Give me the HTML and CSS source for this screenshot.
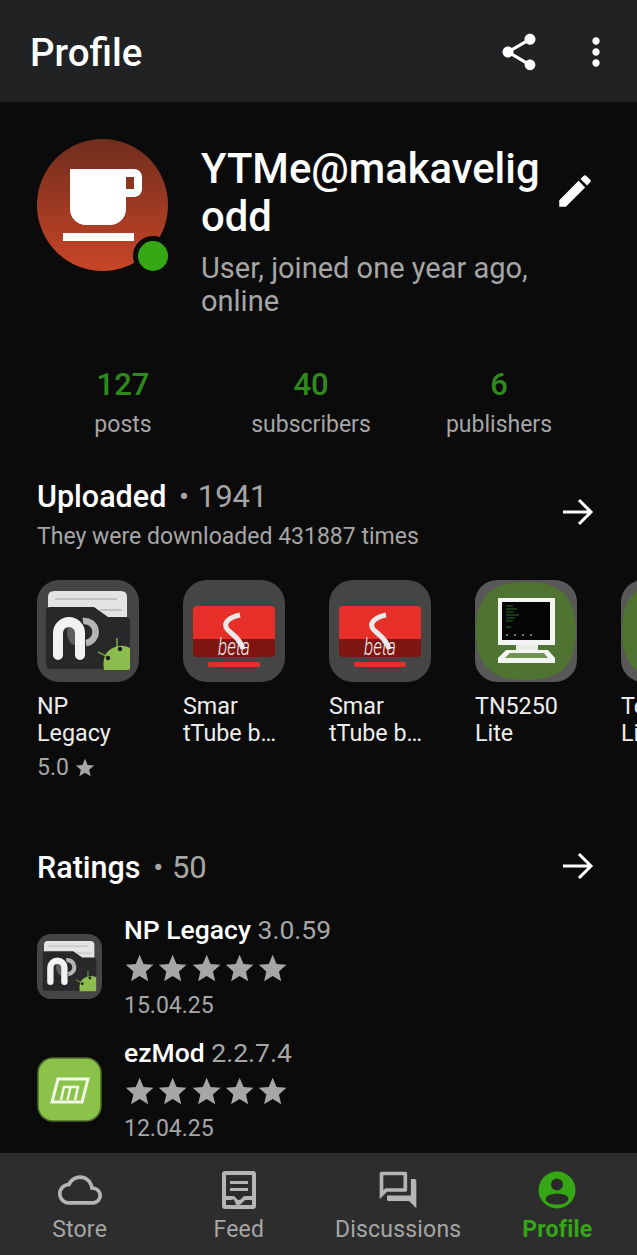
FILE: index.html
```html
<!DOCTYPE html>
<html lang="en">
<head>
<meta charset="utf-8">
<title>Profile</title>
<link rel="stylesheet" href="styles.css">
</head>
<body>
<svg class="defs" width="0" height="0" aria-hidden="true">
  <defs>
    <symbol id="star" viewBox="0 0 24 24"><path d="M12 17.27L18.18 21l-1.64-7.03L22 9.24l-7.19-.61L12 2 9.19 8.63 2 9.24l5.46 4.73L5.82 21z"/></symbol>
    <symbol id="arrow" viewBox="0 0 32 28"><path d="M1 14h28M17 2l12 12-12 12" fill="none" stroke="#fff" stroke-width="3"/></symbol>
    <symbol id="np" viewBox="0 0 102 102">
      <rect width="102" height="102" rx="22" fill="#454545"/>
      <path d="M11 17q0-6 6-6h67q6 0 6 6v25H11z" fill="#e3e3e3"/>
      <path d="M18 19h62M63 30h22" stroke="#c2c2c2" stroke-width="2"/>
      <path d="M9 31q0-4 4-4h44l14 10h18q4 0 4 4v44q0 4-4 4H13q-4 0-4-4z" fill="#28282a"/>
      <ellipse cx="38" cy="52" rx="8" ry="13" fill="#5c5c5c"/>
      <path d="M46 41a11 11 0 0 1 3 22" fill="none" stroke="#b5b5b5" stroke-width="6.500"/>
      <path d="M21 75V53a11 11 0 0 1 22 0v22" fill="none" stroke="#f2f2f2" stroke-width="10" stroke-linecap="round"/>
      <path d="M67 90Q64 72 78 67q8-3 15 1v20q0 2-2 2z" fill="#8cbb50"/>
      <circle cx="71" cy="78" r="2.2" fill="#1c1c1c"/><circle cx="83" cy="69" r="2.2" fill="#1c1c1c"/>
      <path d="M61 72l8 4M80 58v9" stroke="#8cbb50" stroke-width="1.3"/>
    </symbol>
    <symbol id="smart" viewBox="0 0 102 102">
      <rect width="102" height="102" rx="24" fill="#454545"/>
      <path d="M10 30q0-4 4-4h74q4 0 4 4v29H10z" fill="#e72f29"/>
      <path d="M10 59h82v14q0 4-4 4H14q-4 0-4-4z" fill="#7f1510"/>
      <rect x="25" y="82" width="52" height="5" rx="2" fill="#e72f29"/>
      <path d="M57 35C47 37 41 42 43 47c2 6 14 9 17 22" fill="none" stroke="#e9e9e9" stroke-width="5"/>
      <text class="beta" x="51" y="75" text-anchor="middle" textLength="32" lengthAdjust="spacingAndGlyphs">beta</text>
    </symbol>
    <symbol id="tn" viewBox="0 0 102 102">
      <rect width="102" height="102" rx="22" fill="#585858"/>
      <path d="M51 2c34 0 50 14 50 49s-16 49-50 49S1 86 1 51 17 2 51 2z" fill="#4f7431"/>
      <rect x="23" y="18" width="57" height="47" fill="#f4f4f4"/>
      <rect x="27" y="22" width="48" height="38" fill="#050505"/>
      <path d="M31 26h7M31 29h11M31 32h8M31 35h13M31 38h9M31 41h7M31 47h5" stroke="#2a6a2e" stroke-width="1.200"/>
      <path d="M31 55h30" stroke="#9a9a9a" stroke-width="1.500" stroke-dasharray="2 6"/>
      <rect x="41" y="65" width="22" height="7" fill="#e7eee3"/>
      <path d="M31 70h42l7 8v5H23v-5z" fill="#f4f4f4"/>
      <path d="M35 73h34l4 5H30z" fill="#6f9350"/>
    </symbol>
    <symbol id="ez" viewBox="0 0 65 65">
      <rect x="1" y="1" width="63" height="63" rx="15" fill="#8bc34a" stroke="#4d6b2c" stroke-width="1.500"/>
      <path d="M21 22h30l-6 23H15z" fill="none" stroke="#f2f6e8" stroke-width="3"/>
      <path d="M24 43l3-13h14l-3 13M33.500 30l-3 13" fill="none" stroke="#f2f6e8" stroke-width="2.500"/>
    </symbol>
  </defs>
</svg>
<div class="app">
  <header class="toolbar">
    <h1 class="toolbar-title">Profile</h1>
    <svg class="tb-share" viewBox="0 0 24 24"><path d="M18 16.080c-.76 0-1.440.3-1.960.77L8.910 12.700c.05-.23.09-.46.09-.7s-.04-.47-.09-.7l7.050-4.110c.54.5 1.250.81 2.040.81 1.660 0 3-1.340 3-3s-1.340-3-3-3-3 1.340-3 3c0 .24.04.47.09.7L8.040 9.810C7.500 9.310 6.790 9 6 9c-1.660 0-3 1.340-3 3s1.340 3 3 3c.79 0 1.500-.31 2.040-.81l7.120 4.160c-.05.21-.08.43-.08.65 0 1.610 1.310 2.920 2.920 2.920 1.610 0 2.920-1.310 2.920-2.920s-1.310-2.920-2.920-2.920z"/></svg>
    <svg class="tb-more" viewBox="0 0 24 24"><path d="M12 8c1.100 0 2-.9 2-2s-.9-2-2-2-2 .9-2 2 .9 2 2 2zm0 2c-1.100 0-2 .9-2 2s.9 2 2 2 2-.9 2-2-.9-2-2-2zm0 6c-1.100 0-2 .9-2 2s.9 2 2 2 2-.9 2-2-.9-2-2-2z"/></svg>
  </header>

  <main class="content">
    <section class="profile">
      <div class="avatar">
        <svg class="cup" viewBox="0 0 24 24"><path d="M20 3H4v10c0 2.210 1.790 4 4 4h6c2.210 0 4-1.790 4-4v-3h2c1.110 0 2-.9 2-2V5c0-1.110-.89-2-2-2zm0 5h-2V5h2v3zM2.250 19H20v2H2.250z"/></svg>
        <span class="status"></span>
      </div>
      <div class="who">
        <div class="name">YTMe@makaveligodd</div>
        <div class="joined">User, joined one year ago, online</div>
      </div>
      <svg class="edit" viewBox="0 0 24 24"><path d="M3 17.250V21h3.750L17.810 9.940l-3.750-3.750L3 17.250zM20.710 7.040c.39-.39.39-1.020 0-1.410l-2.340-2.340c-.39-.39-1.020-.39-1.410 0l-1.830 1.830 3.750 3.750 1.830-1.830z"/></svg>
    </section>

    <section class="stats">
      <div class="stat"><div class="stat-num">127</div><div class="stat-label">posts</div></div>
      <div class="stat"><div class="stat-num">40</div><div class="stat-label">subscribers</div></div>
      <div class="stat"><div class="stat-num">6</div><div class="stat-label">publishers</div></div>
    </section>

    <section class="uploaded">
      <div class="sec-head">
        <div>
          <div class="sec-title">Uploaded <span class="sec-count"><span class="dot">•</span> 1941</span></div>
          <div class="sec-sub">They were downloaded 431887 times</div>
        </div>
        <svg class="arrow"><use href="#arrow"/></svg>
      </div>
      <div class="apps">
        <div class="app-card">
          <svg class="app-icon"><use href="#np"/></svg>
          <div class="app-name">NP<br>Legacy</div>
          <div class="app-rate">5.0 <svg class="mini-star"><use href="#star"/></svg></div>
        </div>
        <div class="app-card">
          <svg class="app-icon"><use href="#smart"/></svg>
          <div class="app-name">Smar<br>tTube b…</div>
        </div>
        <div class="app-card">
          <svg class="app-icon"><use href="#smart"/></svg>
          <div class="app-name">Smar<br>tTube b…</div>
        </div>
        <div class="app-card">
          <svg class="app-icon"><use href="#tn"/></svg>
          <div class="app-name">TN5250<br>Lite</div>
        </div>
        <div class="app-card">
          <svg class="app-icon"><use href="#tn"/></svg>
          <div class="app-name">Telnet<br>Lite</div>
        </div>
      </div>
    </section>

    <section class="ratings">
      <div class="sec-head rate-head">
        <div class="sec-title">Ratings <span class="sec-count"><span class="dot">•</span> 50</span></div>
        <svg class="arrow"><use href="#arrow"/></svg>
      </div>
      <div class="rate-row">
        <svg class="rate-icon"><use href="#np"/></svg>
        <div class="rate-body">
          <div class="rate-name"><b>NP Legacy</b> 3.0.59</div>
          <div class="stars"><svg><use href="#star"/></svg><svg><use href="#star"/></svg><svg><use href="#star"/></svg><svg><use href="#star"/></svg><svg><use href="#star"/></svg></div>
          <div class="rate-date">15.04.25</div>
        </div>
      </div>
      <div class="rate-row">
        <svg class="rate-icon"><use href="#ez"/></svg>
        <div class="rate-body">
          <div class="rate-name"><b>ezMod</b> 2.2.7.4</div>
          <div class="stars"><svg><use href="#star"/></svg><svg><use href="#star"/></svg><svg><use href="#star"/></svg><svg><use href="#star"/></svg><svg><use href="#star"/></svg></div>
          <div class="rate-date">12.04.25</div>
        </div>
      </div>
    </section>
  </main>

  <nav class="tabs">
    <div class="tab">
      <svg class="tab-icon" viewBox="0 0 24 24"><path d="M19.350 10.040C18.670 6.590 15.640 4 12 4 9.110 4 6.600 5.640 5.350 8.040 2.340 8.360 0 10.910 0 14c0 3.310 2.690 6 6 6h13c2.760 0 5-2.240 5-5 0-2.640-2.050-4.780-4.650-4.960zM19 18H6c-2.210 0-4-1.790-4-4 0-2.050 1.530-3.760 3.560-3.970l1.070-.11.5-.95C8.080 7.140 9.940 6 12 6c2.620 0 4.880 1.860 5.390 4.430l.3 1.500 1.530.11c1.560.1 2.780 1.410 2.780 2.960 0 1.650-1.350 3-3 3z"/></svg>
      <span>Store</span>
    </div>
    <div class="tab">
      <svg class="tab-icon" viewBox="-4 -2 44 44"><path fill-rule="evenodd" d="M4 1h28a3 3 0 0 1 3 3v32a3 3 0 0 1-3 3H4a3 3 0 0 1-3-3V4a3 3 0 0 1 3-3zm1 4v21h7q2 0 3 2t3 2 3-2 3-2h7V5zm0 25v5h26v-5h-6q-2 0-3 2t-4 3-4-3-3-2z"/><path d="M9 11h18v3H9zM9 18h18v3H9z"/></svg>
      <span>Feed</span>
    </div>
    <div class="tab">
      <svg class="tab-icon" viewBox="0 0 24 24"><path d="M15 4v7H5.170L4 12.170V4h11m1-2H3c-.55 0-1 .45-1 1v14l4-4h10c.55 0 1-.45 1-1V3c0-.55-.45-1-1-1zm5 4h-2v9H6v2c0 .55.45 1 1 1h11l4 4V7c0-.55-.45-1-1-1z"/></svg>
      <span>Discussions</span>
    </div>
    <div class="tab tab-active">
      <svg class="tab-icon" viewBox="0 0 44 44"><circle cx="22" cy="22" r="18.500" fill="#35a614"/><circle cx="22" cy="16.500" r="6" fill="#2a2a2a"/><ellipse cx="22" cy="31" rx="11.500" ry="5.500" fill="#2a2a2a"/></svg>
      <span>Profile</span>
    </div>
  </nav>
</div>
</body>
</html>
```

FILE: styles.css
```css
* { box-sizing: border-box; }
html, body { margin: 0; padding: 0; height: 100%; }
body { background: #0b0b0b; font-family: Roboto, "Liberation Sans", sans-serif; color: #fff; overflow: hidden; }
.defs { position: absolute; }
.app { display: flex; flex-direction: column; height: 100vh; overflow: hidden; }

.toolbar { height: 102px; flex: none; background: #212224; display: flex; align-items: center; padding: 2px 25px 0 30px; }
.toolbar-title { margin: 2px 0 0; flex: 1; font-size: 38.5px; font-weight: 500; line-height: 42px; }
.toolbar svg { fill: #fff; }
.tb-share { width: 46px; height: 44px; margin-right: 32px; }
.tb-more { width: 44px; height: 44px; margin-right: -6px; }

.content { flex: 1; min-height: 0; overflow: hidden; }

.profile { display: flex; align-items: flex-start; padding: 37px 0 0 37px; height: 266px; }
.avatar { position: relative; width: 131px; height: 132px; flex: none; border-radius: 50%; background: linear-gradient(#702e1d, #c84527); display: flex; align-items: center; justify-content: center; }
.cup { width: 96px; height: 96px; fill: #fff; margin-left: -2px; }
.status { position: absolute; right: -5px; bottom: -5px; width: 40px; height: 40px; border-radius: 50%; background: #35a614; border: 5px solid #0b0b0b; }
.who { width: 342px; margin-left: 33px; margin-top: 6px; }
.name { font-size: 41.8px; font-weight: 500; line-height: 48px; word-break: break-all; }
.joined { font-size: 29px; line-height: 33px; color: #a6a6a6; margin-top: 11px; }
.edit { width: 42px; height: 42px; fill: #fff; margin: 31px 0 0 11px; }

.stats { display: grid; grid-template-columns: 188px 188px 188px; padding-left: 29px; }
.stat { text-align: center; }
.stat-num { font-size: 31px; font-weight: 500; line-height: 34px; color: #2f8a1d; }
.stat-label { font-size: 23px; line-height: 28px; color: #a6a6a6; margin-top: 9px; }

.uploaded { padding-top: 40px; }
.sec-head { display: flex; justify-content: space-between; align-items: center; padding: 0 43px 0 37px; }
.sec-title { font-size: 30.5px; font-weight: 500; line-height: 36px; }
.sec-count { font-weight: 400; font-size: 31px; color: #a6a6a6; }
.dot { font-size: 30px; margin: 0 1px 0 5px; }
.sec-sub { font-size: 23px; line-height: 28px; color: #a6a6a6; margin-top: 8px; }
.arrow { width: 32px; height: 28px; flex: none; margin-bottom: 4px; }
.uploaded .arrow { margin-bottom: 6px; }
.apps { display: flex; gap: 44px; padding: 29px 0 0 37px; }
.app-card { width: 102px; flex: none; }
.app-icon { width: 102px; height: 102px; display: block; }
.app-name { font-size: 23.3px; line-height: 27px; color: #ededed; margin-top: 11px; white-space: nowrap; }
.app-rate { font-size: 23px; line-height: 28px; color: #a6a6a6; margin-top: 7px; display: flex; align-items: center; gap: 5px; }
.mini-star { width: 22px; height: 22px; fill: #a6a6a6; }
.beta { font-family: Roboto, sans-serif; font-style: italic; font-weight: 300; font-size: 24px; fill: #f2f2f2; }

.ratings { padding-top: 68px; }
.rate-head { height: 36px; margin-bottom: 24px; }
.rate-row { display: flex; align-items: center; padding-left: 37px; margin-top: 10px; height: 113px; }
.rate-icon { width: 65px; height: 65px; flex: none; }
.rate-body { margin-left: 22px; }
.rate-name { font-size: 26.5px; line-height: 32px; color: #a6a6a6; }
.rate-name b { font-weight: 500; color: #fff; }
.stars { display: flex; margin: 6px 0 0 -1px; height: 34px; }
.stars svg { width: 33.3px; height: 33.3px; fill: #a6a6a6; }
.rate-date { font-size: 23px; line-height: 28px; color: #a6a6a6; margin-top: 6px; }

.tabs { height: 102px; flex: none; background: #2d2d2d; display: grid; grid-template-columns: repeat(4, 1fr); }
.tab { display: flex; flex-direction: column; align-items: center; font-size: 23px; letter-spacing: .2px; line-height: 28px; color: #a6a6a6; padding-top: 14.5px; }
.tab-icon { width: 44px; height: 44px; fill: #b5b5b5; margin-bottom: 4.5px; }
.tab-active { color: #35a614; font-weight: 700; }
```
